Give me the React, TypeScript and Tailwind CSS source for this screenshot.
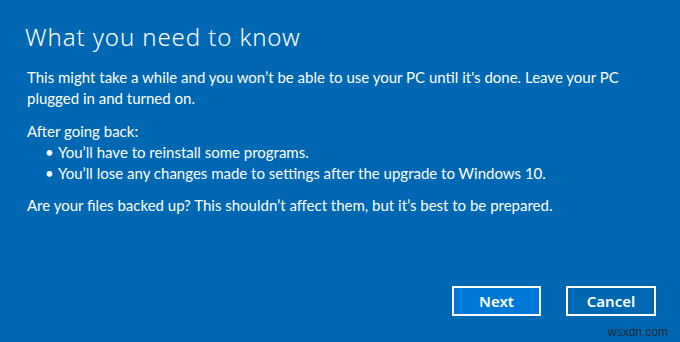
import React from "react";

export default function App() {
  return (
    <div
      className="w-[680px] h-[342px] bg-[#0067b3] text-white flex flex-col relative overflow-hidden"
      style={{ fontFamily: 'Lato, "Noto Sans", sans-serif' }}
    >
      <div className="pl-[25px] pr-2 pt-[22px]">
        <h1
          className="text-[24px] leading-[30px] font-light tracking-[0.9px]"
          style={{ fontFamily: '"Noto Sans", sans-serif' }}
        >
          What you need to know
        </h1>
        <div className="mt-[15px] pl-[2px] text-[15px] leading-[21px] whitespace-nowrap">
          <p>
            This might take a while and you won’t be able to use your PC until it's done. Leave your PC
            <br />
            plugged in and turned on.
          </p>
          <p className="mt-[12px]">After going back:</p>
          <ul>
            <li className="flex items-start">
              <span className="w-[31px] pl-[18px]">•</span>
              <span>You’ll have to reinstall some programs.</span>
            </li>
            <li className="flex items-start">
              <span className="w-[31px] pl-[18px]">•</span>
              <span>You’ll lose any changes made to settings after the upgrade to Windows 10.</span>
            </li>
          </ul>
          <p className="mt-[11px]">Are your files backed up? This shouldn’t affect them, but it’s best to be prepared.</p>
        </div>
      </div>
      <div className="flex-1" />
      <div className="flex justify-end gap-[25px] pr-[24px] pb-[26px]">
        <button
          className="w-[89px] h-[30px] border-2 border-white bg-[#0078d7] text-[15px] font-semibold"
          style={{ fontFamily: '"Noto Sans", sans-serif' }}
        >
          Next
        </button>
        <button
          className="w-[90px] h-[30px] border-2 border-white bg-transparent text-[15px] font-semibold"
          style={{ fontFamily: '"Noto Sans", sans-serif' }}
        >
          Cancel
        </button>
      </div>
      <div
        className="absolute right-[12px] bottom-[3px] text-[12px] leading-[14px] text-[#1a2a3a]"
        style={{ fontFamily: '"Liberation Sans", sans-serif' }}
      >
        wsxdn.com
      </div>
    </div>
  );
}
